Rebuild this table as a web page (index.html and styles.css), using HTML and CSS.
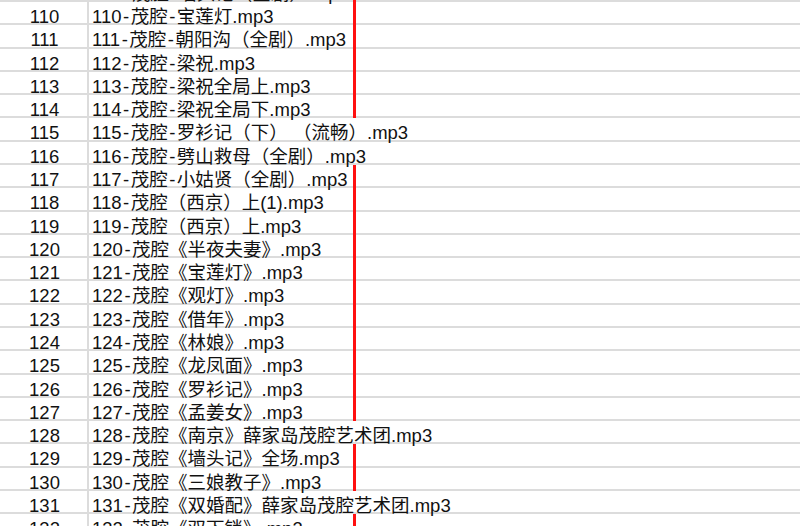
FILE: index.html
```html
<!DOCTYPE html>
<html lang="zh">
<head>
<meta charset="utf-8">
<link rel="stylesheet" href="styles.css">
</head>
<body>
<div class="sheet">
  <div class="row"><div class="num">109</div><div class="name">109<span class="h">-</span>茂腔<span class="h">-</span>墙头记（全剧）.mp3</div></div>
  <div class="row"><div class="num">110</div><div class="name">110<span class="h">-</span>茂腔<span class="h">-</span>宝莲灯.mp3</div></div>
  <div class="row"><div class="num">111</div><div class="name">111<span class="h">-</span>茂腔<span class="h">-</span>朝阳沟（全剧）.mp3</div></div>
  <div class="row"><div class="num">112</div><div class="name">112<span class="h">-</span>茂腔<span class="h">-</span>梁祝.mp3</div></div>
  <div class="row"><div class="num">113</div><div class="name">113<span class="h">-</span>茂腔<span class="h">-</span>梁祝全局上.mp3</div></div>
  <div class="row"><div class="num">114</div><div class="name">114<span class="h">-</span>茂腔<span class="h">-</span>梁祝全局下.mp3</div></div>
  <div class="row over"><div class="num">115</div><div class="name">115<span class="h">-</span>茂腔<span class="h">-</span>罗衫记（下） （流畅）.mp3</div></div>
  <div class="row over"><div class="num">116</div><div class="name">116<span class="h">-</span>茂腔<span class="h">-</span>劈山救母（全剧）.mp3</div></div>
  <div class="row"><div class="num">117</div><div class="name">117<span class="h">-</span>茂腔<span class="h">-</span>小姑贤（全剧）.mp3</div></div>
  <div class="row"><div class="num">118</div><div class="name">118<span class="h">-</span>茂腔（西京）上(1).mp3</div></div>
  <div class="row"><div class="num">119</div><div class="name">119<span class="h">-</span>茂腔（西京）上.mp3</div></div>
  <div class="row"><div class="num">120</div><div class="name">120<span class="h">-</span>茂腔《半夜夫妻》.mp3</div></div>
  <div class="row"><div class="num">121</div><div class="name">121<span class="h">-</span>茂腔《宝莲灯》.mp3</div></div>
  <div class="row"><div class="num">122</div><div class="name">122<span class="h">-</span>茂腔《观灯》.mp3</div></div>
  <div class="row"><div class="num">123</div><div class="name">123<span class="h">-</span>茂腔《借年》.mp3</div></div>
  <div class="row"><div class="num">124</div><div class="name">124<span class="h">-</span>茂腔《林娘》.mp3</div></div>
  <div class="row"><div class="num">125</div><div class="name">125<span class="h">-</span>茂腔《龙凤面》.mp3</div></div>
  <div class="row"><div class="num">126</div><div class="name">126<span class="h">-</span>茂腔《罗衫记》.mp3</div></div>
  <div class="row"><div class="num">127</div><div class="name">127<span class="h">-</span>茂腔《孟姜女》.mp3</div></div>
  <div class="row over"><div class="num">128</div><div class="name">128<span class="h">-</span>茂腔《南京》薛家岛茂腔艺术团.mp3</div></div>
  <div class="row"><div class="num">129</div><div class="name">129<span class="h">-</span>茂腔《墙头记》全场.mp3</div></div>
  <div class="row"><div class="num">130</div><div class="name">130<span class="h">-</span>茂腔《三娘教子》.mp3</div></div>
  <div class="row over"><div class="num">131</div><div class="name">131<span class="h">-</span>茂腔《双婚配》薛家岛茂腔艺术团.mp3</div></div>
  <div class="row"><div class="num">132</div><div class="name">132<span class="h">-</span>茂腔《双下锁》.mp3</div></div>
</div>
</body>
</html>
```
FILE: styles.css
```css
html, body {
  margin: 0;
  padding: 0;
  background: #ffffff;
  overflow: hidden;
}
body {
  width: 800px;
  height: 526px;
  font-family: "Liberation Sans", "Noto Sans CJK SC", sans-serif;
  font-size: 18.5px;
  color: #111111;
}
.sheet {
  margin-top: -21.29px;
}
.row {
  display: flex;
  height: 23.29px;
  box-sizing: border-box;
  background:
    linear-gradient(to right, transparent 353px, #ff1010 353px, #ff1010 356px, transparent 356px),
    linear-gradient(to top, #dcdcdc 0, #dcdcdc 2px, transparent 2px);
}
.row.over {
  background: linear-gradient(to top, #dcdcdc 0, #dcdcdc 2px, transparent 2px);
}
.num {
  width: 89px;
  flex: none;
  text-align: center;
  border-right: 2px solid #dcdcdc;
  line-height: 23px;
  padding-top: 3px;
  padding-left: 2px;
  box-sizing: border-box;
}
.name {
  padding-left: 3px;
  padding-top: 3px;
  line-height: 23px;
  white-space: nowrap;
}
.h {
  margin: 0 1.5px;
}
```
